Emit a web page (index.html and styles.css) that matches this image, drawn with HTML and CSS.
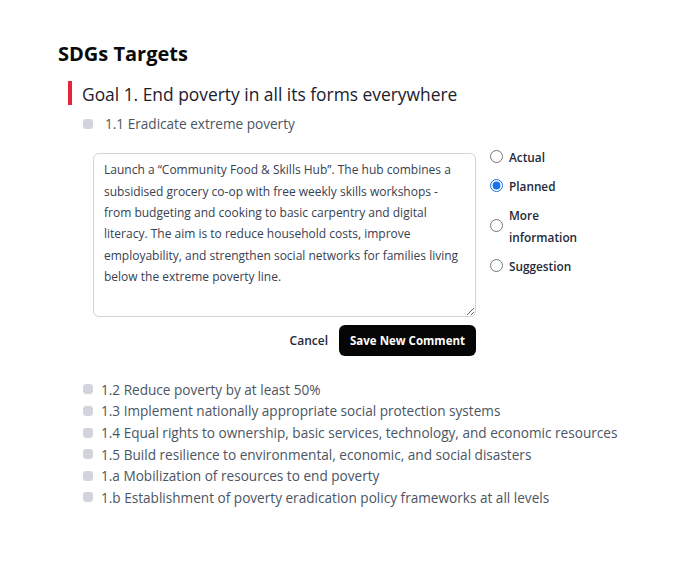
FILE: index.html
```html
<!DOCTYPE html>
<html lang="en">
<head>
<meta charset="utf-8">
<title>SDGs Targets</title>
<link rel="stylesheet" href="styles.css">
</head>
<body>
<main class="page">
  <h1 class="title">SDGs Targets</h1>
  <section class="goal">
    <h2 class="goal-title">Goal 1. End poverty in all its forms everywhere</h2>
    <div class="target target-open">
      <span class="dot"></span>
      <span class="target-text">1.1 Eradicate extreme poverty</span>
    </div>
    <form class="comment">
      <div class="comment-row">
        <textarea class="comment-text">Launch a “Community Food &amp; Skills Hub”. The hub combines a subsidised grocery co-op with free weekly skills workshops - from budgeting and cooking to basic carpentry and digital literacy. The aim is to reduce household costs, improve employability, and strengthen social networks for families living below the extreme poverty line.</textarea>
        <div class="radios">
          <label class="radio"><input type="radio" name="kind"><span class="radio-label">Actual</span></label>
          <label class="radio"><input type="radio" name="kind" checked><span class="radio-label">Planned</span></label>
          <label class="radio"><input type="radio" name="kind"><span class="radio-label">More information</span></label>
          <label class="radio"><input type="radio" name="kind"><span class="radio-label">Suggestion</span></label>
        </div>
      </div>
      <div class="actions">
        <button type="button" class="btn-cancel">Cancel</button>
        <button type="button" class="btn-save">Save New Comment</button>
      </div>
    </form>
    <div class="target-list">
      <div class="target"><span class="dot"></span><span class="target-text">1.2 Reduce poverty by at least 50%</span></div>
      <div class="target"><span class="dot"></span><span class="target-text">1.3 Implement nationally appropriate social protection systems</span></div>
      <div class="target"><span class="dot"></span><span class="target-text">1.4 Equal rights to ownership, basic services, technology, and economic resources</span></div>
      <div class="target"><span class="dot"></span><span class="target-text">1.5 Build resilience to environmental, economic, and social disasters</span></div>
      <div class="target"><span class="dot"></span><span class="target-text">1.a Mobilization of resources to end poverty</span></div>
      <div class="target"><span class="dot"></span><span class="target-text">1.b Establishment of poverty eradication policy frameworks at all levels</span></div>
    </div>
  </section>
</main>
</body>
</html>
```
FILE: styles.css
```css
* { box-sizing: border-box; }
body {
  margin: 0;
  background: #ffffff;
  font-family: "Open Sans", "Noto Sans", sans-serif;
}
.page {
  padding: 40px 0 0 58px;
}
.title {
  margin: 0 0 13px 0;
  font-size: 20px;
  line-height: 28px;
  font-weight: 700;
  color: #0a0a0a;
}
.goal-title {
  margin: 0 0 8px 10px;
  padding: 2px 0 0 10px;
  border-left: 4px solid #e5243b;
  font-size: 17.4px;
  line-height: 22px;
  font-weight: 500;
  color: #1a202c;
}
.target {
  display: flex;
  align-items: center;
  gap: 8px;
  height: 21.6px;
  margin-left: 25px;
  font-size: 13.6px;
  color: #4b5563;
}
.target-open { gap: 12px; }
.dot {
  flex: none;
  width: 10px;
  height: 10px;
  border-radius: 3px;
  background: #d1d5db;
}
.comment {
  margin: 11px 0 23px 35px;
}
.comment-row {
  display: flex;
  align-items: flex-start;
  gap: 14px;
}
.comment-text {
  margin: 7px 0 0 0;
  width: 383px;
  height: 164px;
  padding: 5.5px 10px;
  border: 1px solid #d1d5db;
  border-radius: 6px;
  font-family: "Open Sans", "Noto Sans", sans-serif;
  font-size: 12px;
  line-height: 21.4px;
  color: #374151;
  outline: none;
}
.radios {
  display: flex;
  flex-direction: column;
  gap: 7px;
}
.radio {
  display: flex;
  align-items: center;
  gap: 6px;
  font-size: 11.8px;
  line-height: 22px;
  font-weight: 600;
  color: #1f2937;
}
.radio input {
  flex: none;
  width: 13px;
  height: 13px;
  margin: 0;
  accent-color: #1a73e8;
}
.radio-label {
  max-width: 72px;
}
.actions {
  display: flex;
  justify-content: flex-end;
  align-items: center;
  gap: 11px;
  width: 383px;
  margin-top: 8px;
}
.btn-cancel {
  padding: 0;
  border: 0;
  background: none;
  font-family: "Open Sans", "Noto Sans", sans-serif;
  font-size: 12px;
  font-weight: 600;
  color: #1f2937;
}
.btn-save {
  height: 31px;
  padding: 0 11px;
  border: 0;
  border-radius: 6px;
  background: #050505;
  color: #ffffff;
  font-family: "Open Sans", "Noto Sans", sans-serif;
  font-size: 11.5px;
  font-weight: 700;
}
```
